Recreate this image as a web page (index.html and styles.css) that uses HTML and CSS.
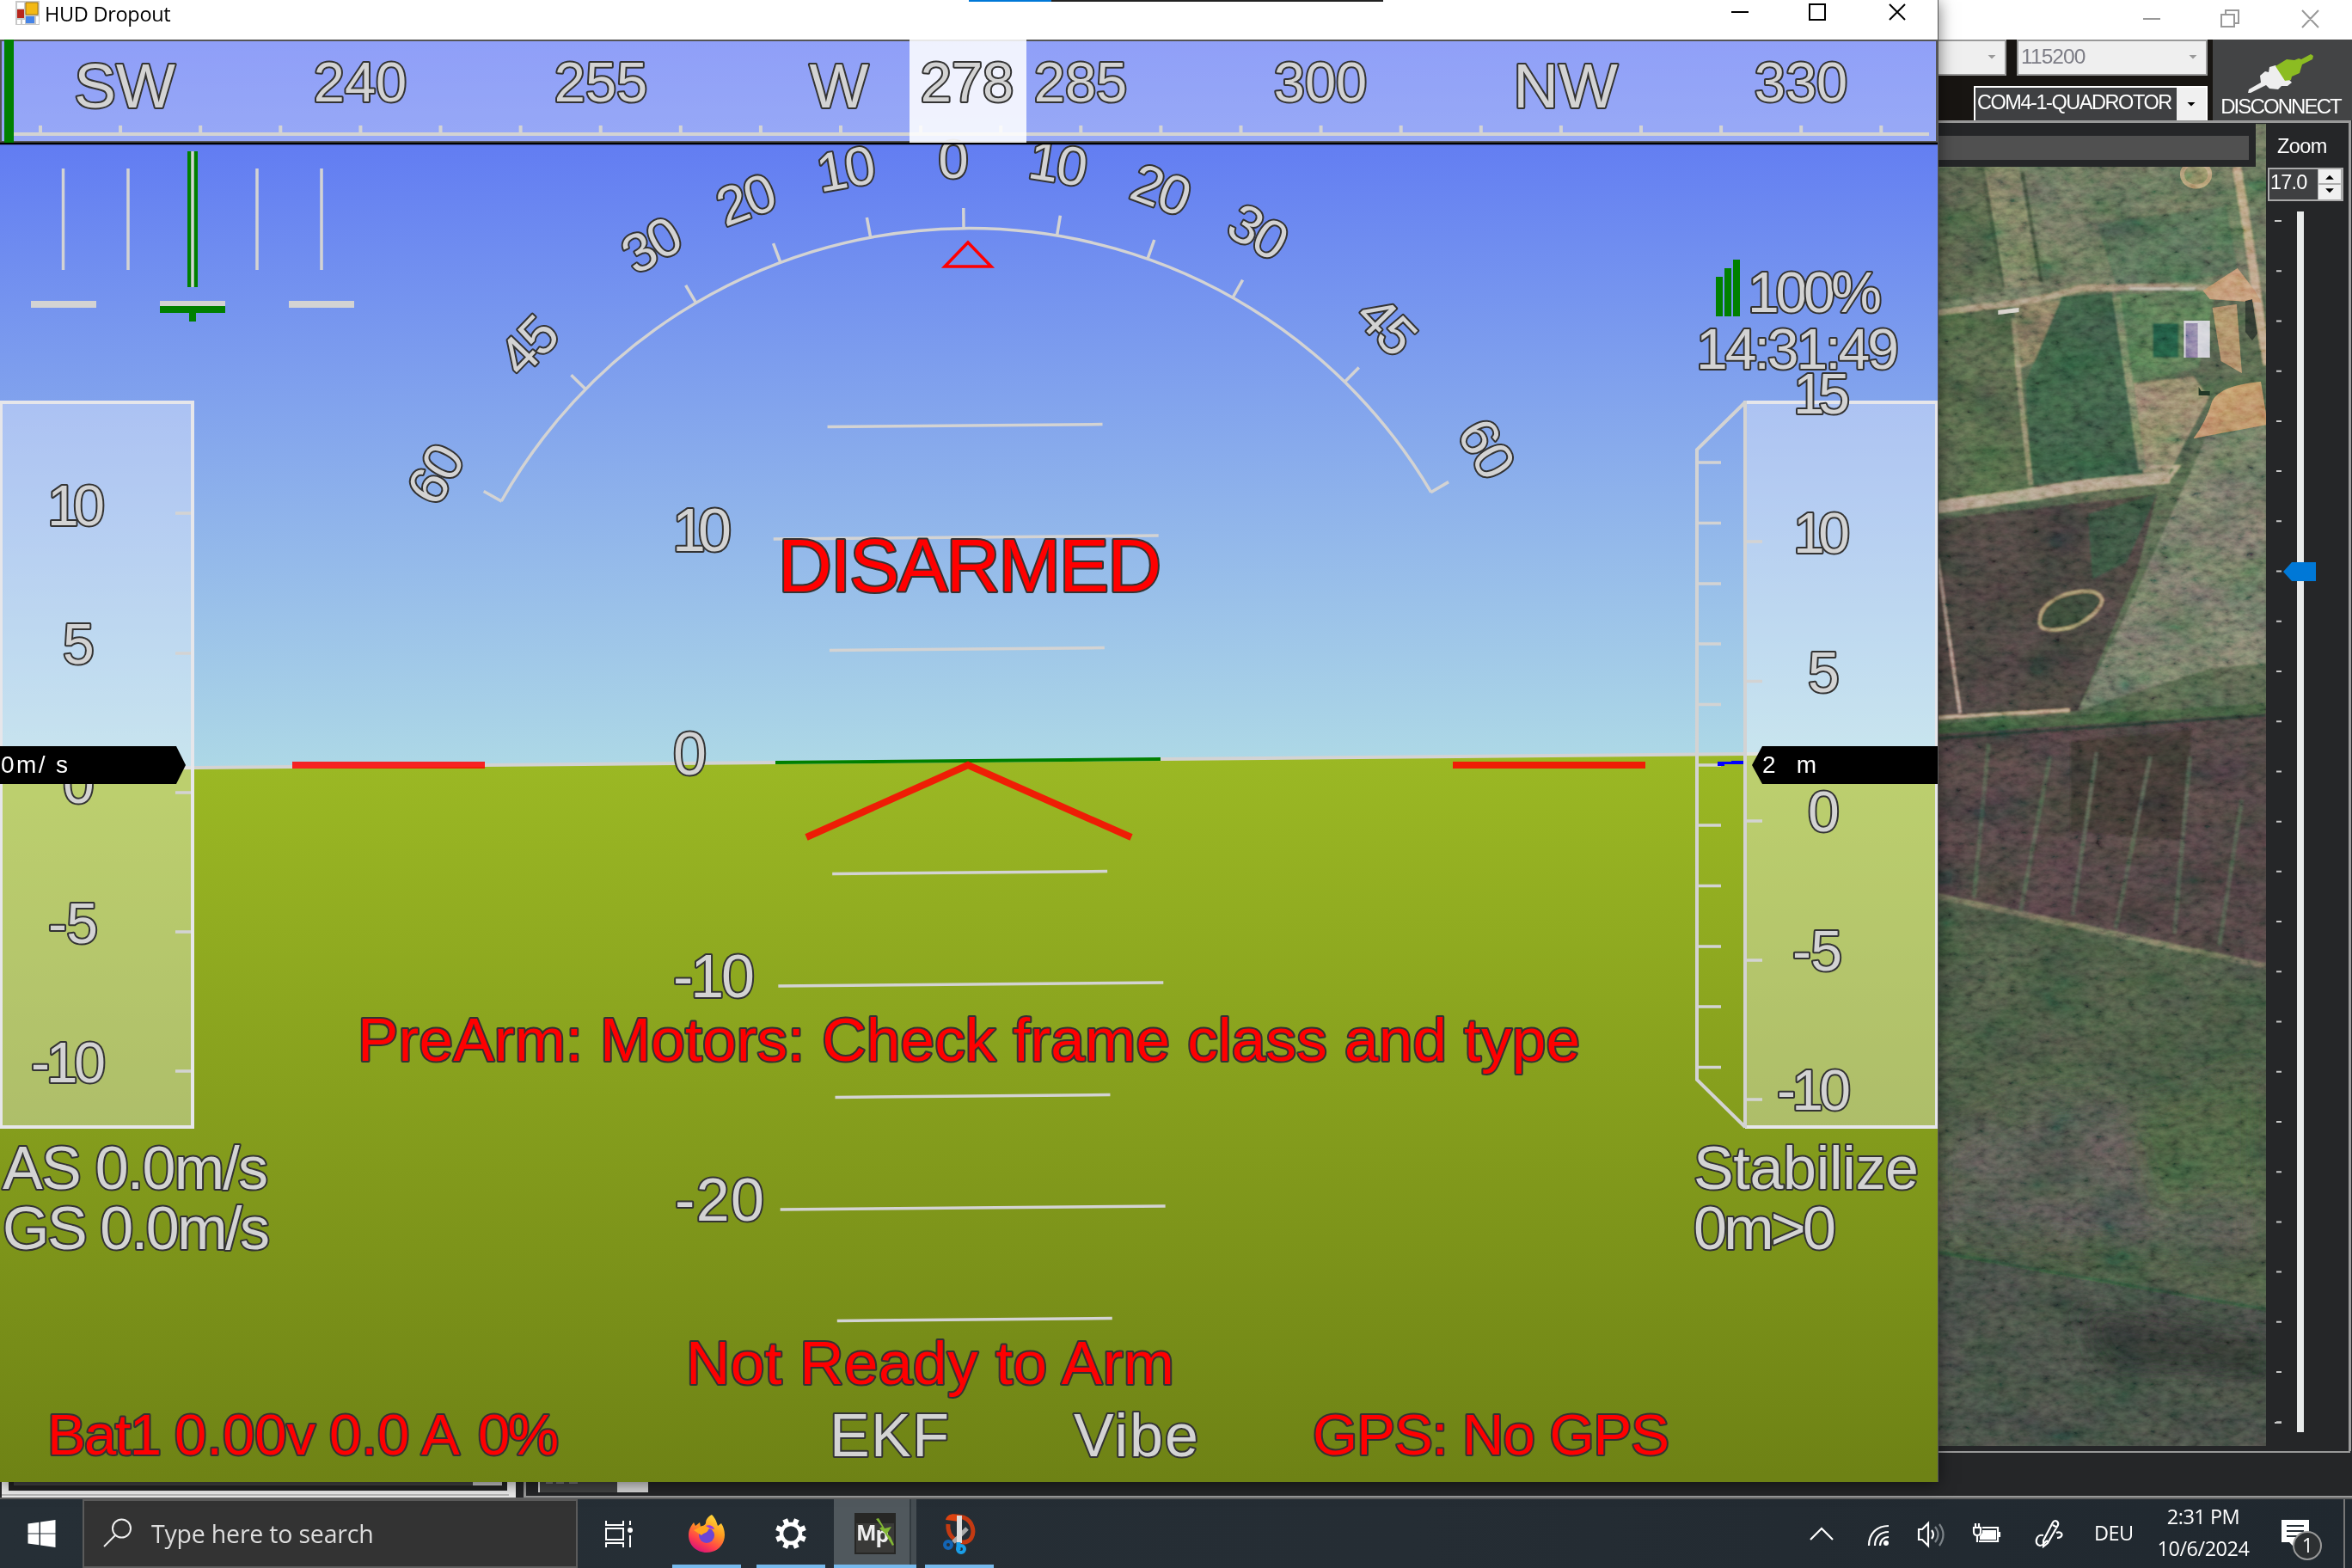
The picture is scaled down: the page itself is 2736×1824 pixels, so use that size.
FILE: index.html
```html
<!DOCTYPE html>
<html lang="en">
<head>
<meta charset="utf-8">
<title>HUD Dropout</title>
<link rel="stylesheet" href="styles.css">
</head>
<body>
<main class="planner">
  <header class="planner-title">
    <svg class="caption-icons" viewBox="2480 0 256 46" fill="none" stroke="#999" stroke-width="2"><path d="M2493 22h20M2584 17h15v14h-15zM2589 17v-5h15v15h-5M2678 12l19 20M2697 12l-19 20"/></svg>
  </header>
  <div class="toolbar">
    <div class="selectors">
      <div class="select-row">
        <div class="combo port"><i class="arrow"></i></div>
        <div class="combo baud"><span>115200</span><i class="arrow"></i></div>
      </div>
      <div class="vehicle"><span class="vehicle-name">COM4-1-QUADROTOR</span><span class="drop"><i class="arrow dark"></i></span></div>
    </div>
    <div class="disconnect">
      <svg class="plug" viewBox="2617 62 76 47"><path d="M2617 108l1-4 14-8-1-8 6-5 4 1 1-6 7-2 19 20-5 4-7 0-4 4-10-1-4-4-18 9z" fill="#eee"/><path d="M2649 77l13-8 9 1 5-2 3 1 11-6 3 2-1 4-12 6-3 10-9 4-1 4-7 1z" fill="#8cbc22"/></svg>
      <span>DISCONNECT</span>
    </div>
  </div>
  <div class="workspace">
    <div class="map-wrap">
      <svg class="map" viewBox="2254 144 382 1538" preserveAspectRatio="none">
        <defs>
          <filter id="grain" x="0" y="0" width="100%" height="100%"><feTurbulence type="fractalNoise" baseFrequency=".08 .14" numOctaves="4" seed="8"/><feColorMatrix values="1.3 .3 0 0 -.32  1 .6 0 0 -.32  1 .4 .1 0 -.3  0 0 0 0 1"/></filter>
          <filter id="blotch" x="0" y="0" width="100%" height="100%"><feTurbulence type="fractalNoise" baseFrequency=".014 .025" numOctaves="3" seed="3"/><feColorMatrix values="1.6 0 0 0 -.3  .7 .7 0 0 -.2  1 0 .4 0 -.2  0 0 0 0 1"/></filter>
          <filter id="soft"><feGaussianBlur stdDeviation="1.2"/></filter>
          <filter id="feather"><feGaussianBlur stdDeviation="14"/></filter>
        </defs>
        <rect x="2254" y="144" width="382" height="1538" fill="#4a5744"/>
        <g filter="url(#soft)">
          <path d="M2250 144h390v195l-390 30z" fill="#5c6551"/>
          <path d="M2250 194h62l20 145-82 14z" fill="#4b5643"/>
          <path d="M2310 194l40 0 26 138-44 4z" fill="#686c55"/>
          <path d="M2440 260l150-20 14 78-140 18z" fill="#4c604b"/>
          <path d="M2250 365l90-10 30 210-120 25z" fill="#48583f"/>
          <path d="M2345 350h70l-46 70-22 10z" fill="#706a53"/>
          <path d="M2400 345l58-5 36 212-130 12-6-120z" fill="#34513d"/>
          <path d="M2462 342l116-4-20 90-76 18z" fill="#4e6848"/>
          <path d="M2505 376h30v40h-30z" fill="#1f4b37"/>
          <path d="M2482 446l70-8 18 24-46 88-30 0z" fill="#857761"/>
          <path d="M2567 508l69-16v280l-190 15 0-10z" fill="#65695a"/>
          <path d="M2567 508l69-16v265l-218 70 60-120z" fill="#65695a"/>
          <path d="M2250 605l260-30-24 92-68 160-168 10z" fill="#403b37"/>
          <path d="M2430 598l80-24-35 80-40 20z" fill="#324537"/>
          <path d="M2250 850l390-26v302l-390-84z" fill="#443a3a"/>
          <path d="M2410 862l140-14-10 130-130-10z" fill="#38322f"/>
        </g>
        <path d="M2250 1042l390 82v405l-390-71z" fill="#414d3c"/>
        <g filter="url(#feather)">
          <path d="M2250 1340q130-90 230-50t140 50v120l-370-30z" fill="#4c4e47"/>
          <path d="M2480 1300l150-60v140l-120 30z" fill="#43543a"/>
        </g>
        <path d="M2250 1458l390 68v156h-390z" fill="#3d443d"/>
        <path d="M2420 1520l220 40v40l-190-10z" fill="#2e332f" filter="url(#feather)"/>
        <g fill="none" filter="url(#soft)">
          <path d="M2254 364l110-14 60-15 130-2 66 11" stroke="#97836a" stroke-width="7"/>
          <path d="M2478 336l76 0" stroke="#d4d0bb" stroke-width="2"/>
          <path d="M2602 194q14 80 22 140t14 90" stroke="#bb9a77" stroke-width="10"/>
          <path d="M2310 210l22 125M2354 200l22 128" stroke="#3d4839" stroke-width="4"/>
          <path d="M2254 590l110-15 60-10 100-10" stroke="#ad977b" stroke-width="14"/>
          <path d="M2344 370l8 90 12 104" stroke="#7b785e" stroke-width="6"/>
          <path d="M2463 346l30 200" stroke="#6a7458" stroke-width="9"/>
          <path d="M2502 543h32l-14 18" stroke="#b39579" stroke-width="4"/>
          <path d="M2256 650l26 180" stroke="#9e8378" stroke-width="4"/>
          <path d="M2254 835l155-9" stroke="#bd9d7e" stroke-width="4"/>
          <path d="M2254 848l382-24" stroke="#3a5138" stroke-width="12"/>
          <path d="M2254 859l382-27" stroke="#223329" stroke-width="3"/>
          <path d="M2374 725c-2-14 10-26 26-32s34-7 40-3 10 8 2 18-24 22-42 24-25 0-26-7z" fill="#333f33" stroke="#9a8664" stroke-width="4"/>
          <path d="M2254 1042l382 82" stroke="#626450" stroke-width="7"/>
          <path d="M2254 1456l382 67" stroke="#2d4936" stroke-width="4"/>
          <path d="M2315 865l-17 180M2386 880l-34 180M2440 875l-28 190M2502 880l-40 200M2548 880l-18 206M2608 930l-26 170" stroke="#4a5045" stroke-width="5"/>
        </g>
        <path d="M2563 338l40-26 20 26 8 14-60-4z" fill="#bd8660"/>
        <path d="M2574 358l28-4 6 80-24-14z" fill="#a97e5d"/>
        <path d="M2612 350l8-2 6 40-6 8-8-10z" fill="#29322a"/>
        <path d="M2552 510q14-18 22-44 10-18 56-22l8 50z" fill="#c4865f"/>
        <path d="M2541 373h30v43h-30z" fill="#dadae3"/>
        <path d="M2543 376h14v40h-14z" fill="#776f99"/>
        <path d="M2326 361l24-3v5l-24 3z" fill="#ded7cb"/>
        <path d="M2558 450l3 5h10v5h-13z" fill="#1c2b20"/>
        <ellipse cx="2555" cy="203" rx="16" ry="14" fill="#86805a" stroke="#b8966d" stroke-width="5"/>
        <rect class="blotch" x="2254" y="144" width="382" height="1538" filter="url(#blotch)"/>
        <rect class="grain" x="2254" y="144" width="382" height="1538" filter="url(#grain)"/>
        <rect x="2254" y="144" width="382" height="1538" opacity=".06"/>
      </svg>
      <div class="map-bar"><div class="map-bar-fill"></div></div>
    </div>
    <aside class="zoom">
      <span class="zoom-label">Zoom</span>
      <div class="spinner"><span>17.0</span><svg class="spin" viewBox="0 0 28 36"><path d="M0 0h28v36H0z" fill="#f0f0f0"/><path d="M1 17.500h26" stroke="#aaa" stroke-width="2"/><path d="M9 12l5-5 5 5zM9 23l5 5 5-5z"/></svg></div>
      <svg class="track" viewBox="2638 234 98 1448" fill="none">
        <path d="M2676 246v1420" stroke="#e8eaea" stroke-width="8"/>
        <path d="M2651 256v1400" stroke="#c8c8c8" stroke-width="6" stroke-dasharray="2 56.220"/>
        <path d="M2646 257h8M2646 1655h8" stroke="#c8c8c8" stroke-width="2"/>
        <path d="M2656 665l10-11h28v22h-28z" fill="#0078d7"/>
      </svg>
    </aside>
  </div>
  <footer class="status">
    <svg class="status-art" viewBox="0 1688 2736 56" preserveAspectRatio="none">
      <path d="M2 1720h598v22H2z" fill="#eee"/><path d="M2 1738h590v2H2z" fill="#bbb"/><path d="M10 1720h580v14H10z" fill="#222324"/><path d="M16 1720h534v8H16z" fill="#434445"/><path d="M550 1720h34v8h-34z" fill="#ccc"/>
      <path d="M600 1720h8v24h-8z" fill="#252628"/>
      <path d="M609 1720h3v20h2124v2H609z" fill="#999"/>
      <path d="M626 1720h92v16h-92z" fill="#434445"/><path d="M626 1720h2v16h-2zM718 1720h36v16h-36z" fill="#d8d8d8"/>
      <path d="M635 1725h8M647 1725h9M662 1725h10" stroke="#777" stroke-width="2"/>
      <path d="M0 1742h2736v2H0z" fill="#606060"/><path d="M2254 1688h480v2h-480z" fill="#999"/>
    </svg>
  </footer>
</main>

<section class="hud-window">
  <header class="hud-title">
    <svg class="form-icon" viewBox="0 0 28 28"><path d="M0 0h28v28H0z" fill="#c9c9c9"/><path d="M2 2h8v7H2zM2 22h4v5H2zM8 22h3v5H8zM24 18h3v9h-3z" fill="#fff"/><path d="M2 10h8v10H2z" fill="#b8261c"/><path d="M12 2h14v14H12z" fill="#f3b915" stroke="#a07410"/><path d="M12 18h10v8H12z" fill="#4584e8"/></svg>
    <span>HUD Dropout</span>
    <div class="progress"><i></i></div>
    <svg class="hud-buttons" viewBox="1980 0 274 46" fill="none" stroke="#000" stroke-width="2"><path d="M2014 14h20M2105 5h18v18h-18zM2198 5l18 18M2216 5l-18 18"/></svg>
  </header>
  <svg class="hud" viewBox="0 46 2254 1678">
    <defs>
      <linearGradient id="sky" x1="0" y1="46" x2="0" y2="886" gradientUnits="userSpaceOnUse"><stop stop-color="#566ef4"/><stop offset="1" stop-color="#add8e6"/></linearGradient>
      <linearGradient id="ground" x1="0" y1="886" x2="0" y2="1724" gradientUnits="userSpaceOnUse"><stop stop-color="#9bb824"/><stop offset="1" stop-color="#6e8215"/></linearGradient>
    </defs>
    <g transform="rotate(-.51 1126 885)">
      <path d="M-30 20h2320v865H-30z" fill="url(#sky)"/>
      <path d="M-30 885h2320v880H-30z" fill="url(#ground)"/>
      <g class="line">
        <path d="M-30 885h2320" stroke-width="4"/>
        <path d="M966 495h320M902 625h448M966 755h320M967 1015h320M903 1145h448M968 1275h320M903 1405h448M968 1535h320"/>
      </g>
      <path d="M902 885h448" stroke="#008000" stroke-width="4"/>
    </g>
    <g class="num pitch">
      <text x="782" y="641" textLength="69">10</text><text x="783" y="901" >0</text><text x="783" y="1160" textLength="95">-10</text><text x="785" y="1420" textLength="104">-20</text>
    </g>

    <g class="line" transform="rotate(-.55 1127 890)">
      <path d="M586.200 577.800A624.500 624.500 0 0 1 1667.800 577.800" stroke-width="3.500"/>
      <path id="tk" d="M1127 266v-24"/>
      <use href="#tk" transform="rotate(-10 1127 890)"/><use href="#tk" transform="rotate(-20 1127 890)"/><use href="#tk" transform="rotate(-30 1127 890)"/><use href="#tk" transform="rotate(-45 1127 890)"/><use href="#tk" transform="rotate(-60 1127 890)"/>
      <use href="#tk" transform="rotate(10 1127 890)"/><use href="#tk" transform="rotate(20 1127 890)"/><use href="#tk" transform="rotate(30 1127 890)"/><use href="#tk" transform="rotate(45 1127 890)"/><use href="#tk" transform="rotate(60 1127 890)"/>
    </g>
    <g class="num roll">
      <text transform="translate(506 552) rotate(-60)" y="22">60</text>
      <text transform="translate(614 402) rotate(-46)" y="22">45</text>
      <text transform="translate(757 285) rotate(-30)" y="22">30</text>
      <text transform="translate(867 232) rotate(-20)" y="22">20</text>
      <text transform="translate(983 196) rotate(-10)" y="22">10</text>
      <text transform="translate(1108 185)" y="22">0</text>
      <text transform="translate(1230 190) rotate(9)" y="22">10</text>
      <text transform="translate(1350 220) rotate(20)" y="22">20</text>
      <text transform="translate(1463 269) rotate(30)" y="22">30</text>
      <text transform="translate(1613 378) rotate(46)" y="22">45</text>
      <text transform="translate(1729 521) rotate(60)" y="22">60</text>
    </g>
    <path d="M1126 282l-27 28h54z" fill="none" stroke="#f00" stroke-width="3.500"/>

    <path d="M0 46h2254v122H0z" fill="#fff" opacity=".34"/>
    <path d="M0 47h2254M1 47v120M2253 47v120" stroke="#555" stroke-width="2"/>
    <path d="M0 165h2254" stroke="#555" stroke-width="2"/><path d="M0 167h2254" stroke="#000" stroke-width="2.500"/>
    <path d="M16 156h2228" stroke="#d3d3d3" stroke-width="4"/>
    <path d="M45 150h2146" stroke="#d3d3d3" stroke-width="8" stroke-dasharray="4 89.100"/>
    <path d="M5 46h11v120H5z" fill="#008000"/>
    <path d="M1058 46h136v120h-136z" fill="#fff" opacity=".86"/>
    <g class="num heading">
      <text class="cardinal" x="145" y="125">SW</text><text x="419" y="118">240</text><text x="699" y="118">255</text><text class="cardinal" x="976" y="125">W</text><text x="1125" y="118">278</text><text x="1257" y="118">285</text><text x="1536" y="118">300</text><text class="cardinal" x="1821" y="125">NW</text><text x="2095" y="118">330</text>
    </g>

    <path d="M218 176h12v158h-12z" fill="#008000"/>
    <path class="line" d="M73.500 196v118M149 196v118M224 176v158M299 196v118M374 196v118"/>
    <path d="M36 350h76v8H36zM186 350h76v6h-76zM336 350h76v8h-76z" fill="#d3d3d3"/>
    <path d="M186 356h76v8h-34v10h-8v-10h-34z" fill="#008000"/>

    <path d="M0 468h224v843H0zM2030 468h224v843h-224z" fill="#fff" opacity=".34"/>
    <path class="edge" d="M1 468h223v843H1zM2030 468h223v843h-223"/>
    <g class="line" stroke-width="4">
      <path d="M2030 466v846M2030 468l-56 55v733l56 55" stroke-width="4"/>
      <path d="M204 597h18M204 760h18M204 922h18M204 1084h18M204 1246h18M2032 630h18M2032 792.500h18M2032 955h18M2032 1117h18M2032 1279h18M1976 538h26M1976 608.500h26M1976 679h26M1976 749h26M1976 819.500h26M1976 890h26M1976 960h26M1976 1030.500h26M1976 1101h26M1976 1171h26M1976 1241.500h26"/>
    </g>
    <path d="M1998 886h16v-1h14v4h-22v2h-8z" fill="#00f"/>
    <g class="num scale">
      <text x="55" y="611" textLength="67">10</text><text x="73" y="772">5</text><text x="73" y="934">0</text><text x="56" y="1097" textLength="58">-5</text><text x="36" y="1259" textLength="87">-10</text>
      <text x="2086" y="481" textLength="66">15</text><text x="2086" y="643" textLength="66">10</text><text x="2103" y="805">5</text><text x="2103" y="967">0</text><text x="2085" y="1129" textLength="58">-5</text><text x="2067" y="1291" textLength="86">-10</text>
    </g>
    <g class="num scale">
      <text x="2033" y="363" textLength="156">100%</text><text x="1973" y="429" textLength="236">14:31:49</text>
    </g>
    <path d="M1996 322h8v46h-8zM2006 312h8v56h-8zM2016 302h8v66h-8z" fill="#008000"/>
    <path d="M0 868h205l11 22-11 22H0zM2254 868h-204l-12 22 12 22h204z"/>
    <g class="readout"><text x="1" y="899" textLength="78">0m/ s</text><text x="2050" y="899" textLength="63" xml:space="preserve">2  m</text></g>

    <g fill="none" stroke="#f00" stroke-width="8" opacity=".84"><path d="M340 890h224M1690 890h224M938 974l188-84 190 84"/></g>

    <g class="num warn">
      <text class="armed" x="905" y="688" textLength="446">DISARMED</text>
      <text x="416" y="1234" textLength="1422">PreArm: Motors: Check frame class and type</text>
      <text x="798" y="1610" textLength="568">Not Ready to Arm</text>
      <text class="small" x="55" y="1692"><tspan textLength="133">Bat1</tspan><tspan x="203">0.00v</tspan> <tspan x="383">0.0</tspan> <tspan x="490">A</tspan> <tspan x="556" textLength="94">0%</tspan></text>
      <text class="small" x="1527" y="1692" textLength="415">GPS: No GPS</text>
    </g>
    <g class="num pitch">
      <text x="3" y="1383" textLength="309">AS 0.0m/s</text><text x="3" y="1453" textLength="311">GS 0.0m/s</text>
      <text x="1970" y="1383" textLength="262">Stabilize</text><text x="1970" y="1453" textLength="166">0m&gt;0</text>
      <text x="965" y="1694" textLength="139">EKF</text><text x="1249" y="1694" textLength="145">Vibe</text>
    </g>
  </svg>
</section>

<nav class="taskbar">
  <div class="start"><svg viewBox="0 0 32 32" fill="#fff"><path d="M0 4.500l13-1.800v12.700H0zM14.500 2.500L32 0v15.400H14.500zM0 16.600h13v12.700L0 27.500zM14.500 16.600H32V32l-17.500-2.500z"/></svg></div>
  <div class="search"><svg viewBox="0 0 34 34" fill="none" stroke="#eee" stroke-width="2"><circle cx="21.500" cy="12" r="10.500"/><path d="M14 20L1 33"/></svg><span>Type here to search</span></div>
  <div class="apps">
    <div class="app plain"><svg viewBox="0 0 32 32" width="32" height="32" fill="none" stroke="#fff" stroke-width="2"><path d="M1 1v5h20V1M1 10h20v13H1zM1 32v-5h20v5M29 1v5M29 18v14"/><circle cx="29" cy="12" r="3" fill="#fff" stroke="none"/></svg></div>
    <div class="app"><svg viewBox="0 0 42 44" width="42" height="44"><defs><linearGradient id="ff" x1=".8" y1="0" x2=".3" y2="1"><stop stop-color="#ffe23e"/><stop offset=".4" stop-color="#ff9a20"/><stop offset=".75" stop-color="#ff3f4b"/><stop offset="1" stop-color="#d6127c"/></linearGradient></defs><path d="M27 0c5 5 6 10 7 13l4-3c4 6 5 14 3 20-3 9-11 14-20 14C9 44 0 35 0 24c0-6 2-10 6-15l2 4 5-4 1 5c2 0 5-2 6-4 0-5 3-8 7-10z" fill="url(#ff)"/><circle cx="21" cy="24" r="9" fill="#6b45d6"/><path d="M12 15c6-4 14-3 18 3-2-2-5-2-7-1 0 4-6 4-8 7l-9-6z" fill="#ffa51f"/><path d="M20 13c4-2 9 0 10 4l-5-1z" fill="#9637e5"/></svg></div>
    <div class="app"><svg viewBox="-18 -18 36 36" width="36" height="36" fill="none" stroke="#fff"><circle r="11" stroke-width="4.500"/><path id="tooth" d="M0-12v-6M0 12v6" stroke-width="6" transform="rotate(22.500)"/><use href="#tooth" transform="rotate(45)"/><use href="#tooth" transform="rotate(90)"/><use href="#tooth" transform="rotate(135)"/></svg></div>
    <div class="app active"><svg viewBox="0 0 48 48" width="48" height="48"><path d="M0 0h48v48H0z" fill="#272725"/><path d="M2 12h44v34H2z" fill="#3a3a38"/><text x="2" y="32" class="mp">M<tspan dx="-1" dy="2">p</tspan></text><path d="M25 7l3-1 7 12 8-2-5 8 4 4 4 9-2 1-9-15-6-5 3-2z" fill="#82b834"/></svg></div>
    <div class="app"><svg viewBox="0 0 38 48" width="38" height="48" fill="none"><path d="M8 6C20 1 31 6 34 16s-2 19-12 18C12 32 5 25 6 13" stroke="#c43a12" stroke-width="5"/><path d="M3 8c2-8 12-8 18-4l-2 6z" fill="#dd4310"/><path d="M28 18L12 34" stroke="#aaa" stroke-width="5"/><path d="M19 3v32" stroke="#ddd" stroke-width="6"/><circle cx="6" cy="37" r="4" stroke="#1365b5" stroke-width="4"/><path d="M18 34v9" stroke="#1a9fe8" stroke-width="5"/><circle cx="21" cy="42" r="4" stroke="#1a9fe8" stroke-width="4"/></svg></div>
  </div>
  <div class="tray">
    <svg class="tray-icons" viewBox="2100 1744 310 80" fill="none" stroke="#fff" stroke-width="2.200">
      <path d="M2106 1791l13-13 13 13"/>
      <path d="M2174 1798c0-14 9-23 23-23M2181 1798c0-10 6-16 16-16M2187 1798c0-6 4-10 10-10"/><circle cx="2194" cy="1795" r="3" fill="#fff" stroke="none"/>
      <path d="M2232 1779h4l7-7v26l-7-7h-4zM2247 1780q4 5 0 10"/><path d="M2251 1776q7 9 0 18M2256 1773q9 12 0 25" stroke="#7b8287"/>
      <path d="M2306 1777h18v16h-22M2326 1782v6M2296 1777h8v5q0 4-4 4t-4-4zM2298 1777v-5M2302 1777v-5M2300 1786v8"/><path d="M2306 1780h16v11h-19v-4l3-4z" fill="#fff" stroke="none"/>
      <path d="M2391 1769q4 1 3 5l-12 21-5 4 0-7 11-21q1-2 3-2zM2388 1774l5 3M2377 1786c-9-2-11 11-4 12 5 0 4-4 9-6M2392 1783c8-3 9 6 1 6"/>
    </svg>
    <span class="lang">DEU</span>
    <div class="clock"><span>2:31 PM</span><span>10/6/2024</span></div>
    <svg class="notice" viewBox="2650 1744 60 80"><path d="M2654 1768h32v26h-17v6l-6-6h-9z" fill="#fff"/><path d="M2660 1775h20M2660 1781h20M2660 1787h12" stroke="#262f36" stroke-width="2"/><circle cx="2684" cy="1798" r="16" fill="#2d3032" stroke="#999" stroke-width="2"/><text x="2684" y="1806" class="count">1</text></svg>
    <i class="peek"></i>
  </div>
</nav>
</body>
</html>
```
FILE: styles.css
```css
* { box-sizing: border-box; }
body { margin: 0; width: 2736px; height: 1824px; overflow: hidden; display: grid; grid-template-rows: 1744px 80px; position: relative; background: #252628; font-family: "Liberation Sans", Arial, sans-serif; }
svg { display: block; flex: none; }

/* Planner main window */
.planner { display: grid; grid-template-rows: 46px 94px 1548px 56px; background: #252628; overflow: hidden; }
.planner-title { background: #fff; display: flex; justify-content: flex-end; }
.caption-icons { width: 256px; height: 46px; }
.toolbar { background: #181512; display: flex; justify-content: flex-end; gap: 6px; }
.selectors { display: flex; flex-direction: column; align-items: flex-end; gap: 12px; }
.select-row { display: flex; gap: 12px; }
.combo { height: 42px; background: #efefef; border: 2px solid #999; display: flex; align-items: center; justify-content: space-between; padding: 0 10px 2px 5px; color: #7d7d86; font-size: 24.500px; letter-spacing: -.9px; }
.port { width: 134px; justify-content: flex-end; }
.baud { width: 222px; padding-left: 3px; }
.arrow { width: 10px; height: 5px; background: #999; clip-path: polygon(0 0, 100% 0, 50% 100%); }
.arrow.dark { background: #000; }
.vehicle { width: 272px; height: 40px; display: flex; border: 2px solid #fff; border-bottom: 0; background: #3f4042; color: #fff; }
.vehicle-name { flex: 1; min-width: 0; font-size: 23.500px; line-height: 34px; padding-left: 2px; white-space: nowrap; letter-spacing: -1.450px; }
.drop { flex: none; width: 34px; background: #f0f0f0; display: flex; align-items: center; justify-content: center; }
.disconnect { width: 162px; background: #434445; color: #fff; display: flex; flex-direction: column; align-items: center; padding-top: 16px; padding-right: 4px; font-size: 24px; line-height: 30px; letter-spacing: -1.900px; }
.plug { width: 76px; height: 47px; }
.workspace { display: grid; grid-template-columns: 382px 98px; justify-content: end; border-top: 3px solid #999; border-right: 3px solid #999; background: #252628; padding-top: 1px; margin-right: 1px; }
.map-wrap { position: relative; height: 1538px; width: 384px; }
.map { width: 384px; height: 1538px; }
.map-bar { position: absolute; left: 0; top: 0; width: 372px; height: 50px; background: #252628; padding: 14px 8px 8px 0; }
.map-bar-fill { background: #505050; height: 28px; }
.blotch { mix-blend-mode: overlay; opacity: .25; }
.grain { mix-blend-mode: overlay; opacity: .38; }
.zoom { color: #fff; display: flex; flex-direction: column; align-items: flex-start; padding: 12px 0 0 4px; }
.zoom-label { font-size: 23.500px; line-height: 28px; padding-left: 11px; letter-spacing: -.6px; }
.spinner { margin-top: 11px; width: 88px; height: 39px; border: 2px solid #aaa; background: #3f4042; display: flex; justify-content: space-between; font-size: 23.500px; line-height: 30px; padding-left: 1px; letter-spacing: -.8px; }
.spin { width: 28px; height: 35px; }
.track { width: 98px; height: 1448px; }
.status { background: #252628; }
.status-art { width: 2736px; height: 56px; }

/* HUD window floating above the planner */
.hud-window { position: absolute; left: 0; top: 0; width: 2255px; height: 1724px; border-right: 1px solid #555; box-shadow: 0 2px 18px rgba(0, 0, 0, .55); background: #fff; }
.hud-title { height: 46px; display: flex; align-items: flex-start; justify-content: space-between; padding-left: 18px; position: relative; background: #fff; }
.form-icon { width: 28px; height: 28px; margin-top: 1px; }
.hud-title span { flex: 1; padding-left: 6px; font: 23.500px/33px "Open Sans", "Noto Sans", sans-serif; letter-spacing: -.3px; color: #000; }
.progress { position: absolute; left: 1127px; top: 0; width: 482px; height: 2px; background: #222; }
.progress i { display: block; width: 96px; height: 2px; background: #0078d7; }
.hud-buttons { width: 274px; height: 46px; }
.hud { width: 2254px; height: 1678px; }
.line { stroke: #d3d3d3; stroke-width: 3.500px; fill: none; }
.edge { stroke: #e6e6ea; stroke-width: 4px; fill: none; }
.num { fill: #d3d3d3; stroke: #333; stroke-width: 4px; stroke-linejoin: round; paint-order: stroke; }
.pitch { font-size: 70px; }
.roll { font-size: 63px; letter-spacing: -2px; text-anchor: middle; }
.heading { font-size: 65px; text-anchor: middle; }
.cardinal { font-size: 73px; }
.scale { font-size: 66px; }
.warn { fill: #f00; font-size: 71px; }
.armed { font-size: 87px; }
.small { font-size: 67px; }
.readout { fill: #fff; font-size: 28px; }

/* Taskbar */
.taskbar { background: linear-gradient(90deg, #262f36, #252d34 60%, #20282f); display: flex; }
.start { width: 96px; padding: 24px 0 0 32px; }
.start svg { width: 33px; height: 32px; }
.search { width: 576px; background: #333; border: 2px solid #5b5b5b; display: flex; align-items: center; padding-left: 22px; gap: 22px; color: #dcdcdc; font: 28.500px "Open Sans", "Noto Sans", sans-serif; letter-spacing: -.2px; }
.search svg { width: 34px; height: 34px; margin-bottom: 2px; }
.apps { display: flex; padding-left: 8px; gap: 16px; }
.app { width: 80px; display: flex; align-items: center; justify-content: center; border-bottom: 4px solid #76b9ed; padding-top: 4px; margin-right: 2px; }
.app.plain { border-color: transparent; margin-right: 6px; }
.app.active { width: 96px; margin: 0 -6px 0 -8px; background: linear-gradient(90deg, #50585d 88px, #333b40 88px, #333b40 90px, #454d52 90px); }
.mp { fill: #eee; font-size: 25px; font-weight: 700; font-family: "Open Sans", sans-serif; }
.tray { margin-left: auto; display: flex; color: #fff; font: 23.500px/37px "Open Sans", "Noto Sans", sans-serif; letter-spacing: -.5px; width: 636px; }
.tray-icons { width: 310px; height: 80px; }
.lang { width: 98px; padding: 21px 0 0 26px; }
.clock { width: 110px; display: flex; flex-direction: column; align-items: center; padding-top: 2px; }
.notice { width: 60px; height: 80px; margin-left: 32px; }
.count { fill: #fff; font-size: 23px; text-anchor: middle; }
.peek { width: 2px; background: #777; margin-left: 16px; }
```
